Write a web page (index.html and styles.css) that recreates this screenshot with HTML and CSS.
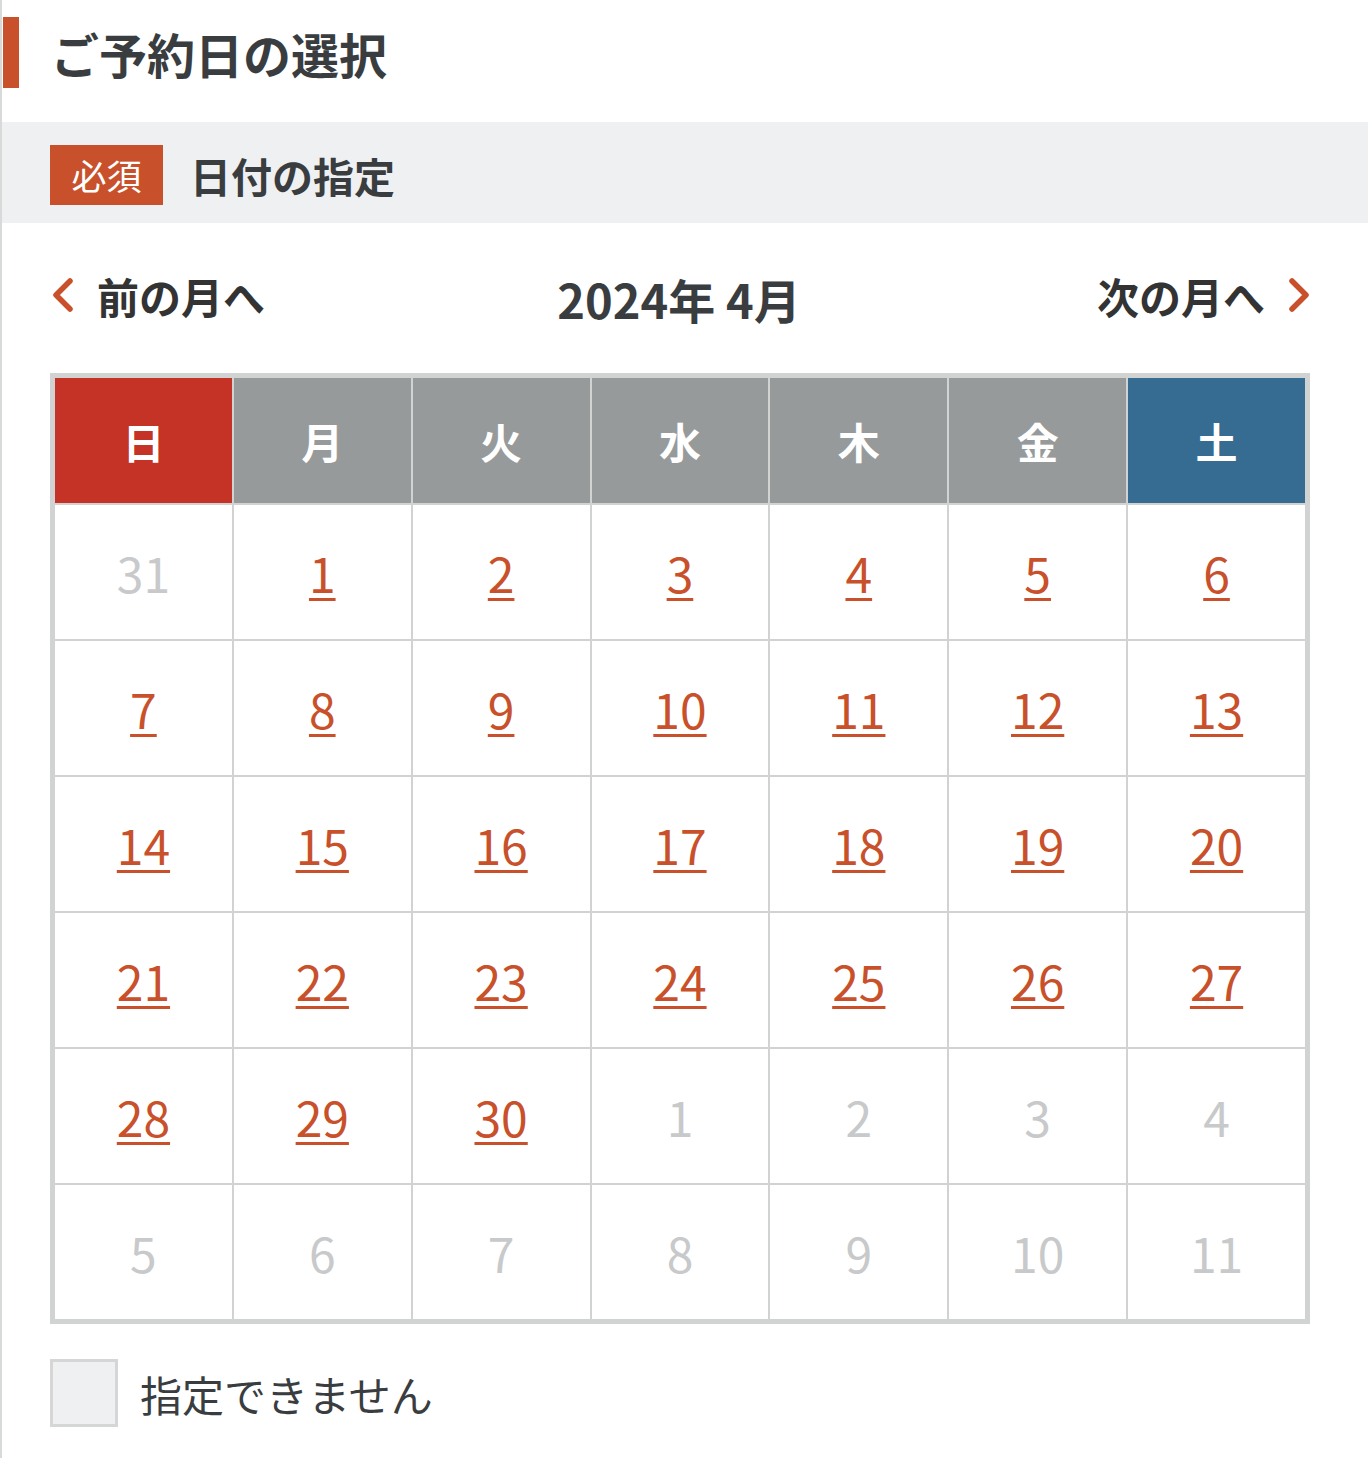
FILE: index.html
```html
<!DOCTYPE html>
<html lang="ja">
<head>
    <meta charset="UTF-8">
    <meta name="viewport" content="width=device-width, initial-scale=1.0">
    <title>ご予約日の選択</title>
    <link rel="stylesheet" href="styles.css">
</head>
<body>

    <h1 class="page-title">ご予約日の選択</h1>

    <div class="field-head">
        <span class="badge">必須</span>
        <span class="field-label">日付の指定</span>
    </div>

    <div class="calendar">
        <div class="month-nav">
            <a class="nav-link prev" href="#">
                <svg class="chevron" width="22" height="34" viewBox="0 0 22 34"><path d="M18 3 L4 17 L18 31" /></svg>
                前の月へ
            </a>
            <div class="month-title">2024年 4月</div>
            <a class="nav-link next" href="#">
                次の月へ
                <svg class="chevron" width="22" height="34" viewBox="0 0 22 34"><path d="M4 3 L18 17 L4 31" /></svg>
            </a>
        </div>

        <table class="month">
            <thead>
                <tr>
                    <th class="sun">日</th>
                    <th>月</th>
                    <th>火</th>
                    <th>水</th>
                    <th>木</th>
                    <th>金</th>
                    <th class="sat">土</th>
                </tr>
            </thead>
            <tbody>
                <tr>
                    <td class="off">31</td>
                    <td><a href="#">1</a></td>
                    <td><a href="#">2</a></td>
                    <td><a href="#">3</a></td>
                    <td><a href="#">4</a></td>
                    <td><a href="#">5</a></td>
                    <td><a href="#">6</a></td>
                </tr>
                <tr>
                    <td><a href="#">7</a></td>
                    <td><a href="#">8</a></td>
                    <td><a href="#">9</a></td>
                    <td><a href="#">10</a></td>
                    <td><a href="#">11</a></td>
                    <td><a href="#">12</a></td>
                    <td><a href="#">13</a></td>
                </tr>
                <tr>
                    <td><a href="#">14</a></td>
                    <td><a href="#">15</a></td>
                    <td><a href="#">16</a></td>
                    <td><a href="#">17</a></td>
                    <td><a href="#">18</a></td>
                    <td><a href="#">19</a></td>
                    <td><a href="#">20</a></td>
                </tr>
                <tr>
                    <td><a href="#">21</a></td>
                    <td><a href="#">22</a></td>
                    <td><a href="#">23</a></td>
                    <td><a href="#">24</a></td>
                    <td><a href="#">25</a></td>
                    <td><a href="#">26</a></td>
                    <td><a href="#">27</a></td>
                </tr>
                <tr>
                    <td><a href="#">28</a></td>
                    <td><a href="#">29</a></td>
                    <td><a href="#">30</a></td>
                    <td class="off">1</td>
                    <td class="off">2</td>
                    <td class="off">3</td>
                    <td class="off">4</td>
                </tr>
                <tr>
                    <td class="off">5</td>
                    <td class="off">6</td>
                    <td class="off">7</td>
                    <td class="off">8</td>
                    <td class="off">9</td>
                    <td class="off">10</td>
                    <td class="off">11</td>
                </tr>
            </tbody>
        </table>

        <label class="undecided">
            <input type="checkbox" name="undecided">
            <span class="box"></span>
            指定できません
        </label>
    </div>

</body>
</html>
```

FILE: styles.css
```css
body {
    font-family: "Noto Sans CJK JP", "Noto Sans", sans-serif;
    margin: 0;
    padding: 0;
    min-height: 1458px;
    border-left: 2px solid #d8d9d9;
    background-color: #fff;
    color: #3a3d40;
}

.page-title {
    margin: 17px 0 0 1px;
    height: 71px;
    display: flex;
    align-items: center;
    border-left: 16px solid #c8512b;
    padding-left: 32px;
    font-size: 48px;
    font-weight: 700;
    line-height: 1;
}

.field-head {
    margin-top: 34px;
    height: 101px;
    background-color: #eff0f2;
    display: flex;
    align-items: center;
    padding: 4px 0 0 48px;
    box-sizing: border-box;
}

.badge {
    background-color: #c8512b;
    color: #fff;
    font-size: 35px;
    width: 113px;
    height: 60px;
    display: flex;
    align-items: center;
    justify-content: center;
}

.field-label {
    margin-left: 27px;
    font-size: 41px;
    font-weight: 700;
}

.calendar {
    padding: 0 58px 0 48px;
}

.month-nav {
    display: flex;
    align-items: center;
    justify-content: space-between;
    height: 150px;
}

.nav-link {
    display: flex;
    align-items: center;
    gap: 23px;
    color: #333;
    text-decoration: none;
    font-size: 42px;
    font-weight: 700;
}

.nav-link.prev {
    margin-left: 2px;
    margin-top: -6px;
}

.nav-link.next {
    margin-top: -6px;
}

.chevron path {
    fill: none;
    stroke: #c8512b;
    stroke-width: 5.5;
    stroke-linecap: round;
    stroke-linejoin: round;
}

.month-title {
    font-size: 47px;
    font-weight: 700;
    color: #3a3d40;
    margin-left: -4px;
}

.month {
    width: 1260px;
    border: 3px solid #d1d2d2;
    border-spacing: 2px;
    background-color: #d1d2d2;
    table-layout: fixed;
}

.month th {
    height: 125px;
    background-color: #979a9b;
    color: #fff;
    font-size: 42px;
    font-weight: 700;
    padding: 0;
}

.month th.sun {
    background-color: #c43326;
}

.month th.sat {
    background-color: #366c92;
}

.month td {
    height: 134px;
    background-color: #fff;
    text-align: center;
    font-size: 48px;
    padding: 0;
}

.month td a {
    color: #c8512b;
    text-decoration: underline;
    text-decoration-thickness: 3px;
    text-underline-offset: 5px;
}

.month td.off {
    color: #c8c9ca;
}

.undecided {
    display: flex;
    align-items: center;
    gap: 22px;
    margin-top: 35px;
    font-size: 42px;
    color: #3a3d40;
    cursor: pointer;
}

.undecided input {
    display: none;
}

.box {
    width: 62px;
    height: 62px;
    border: 3px solid #d5d6d6;
    background-color: #eff0f2;
}
```
